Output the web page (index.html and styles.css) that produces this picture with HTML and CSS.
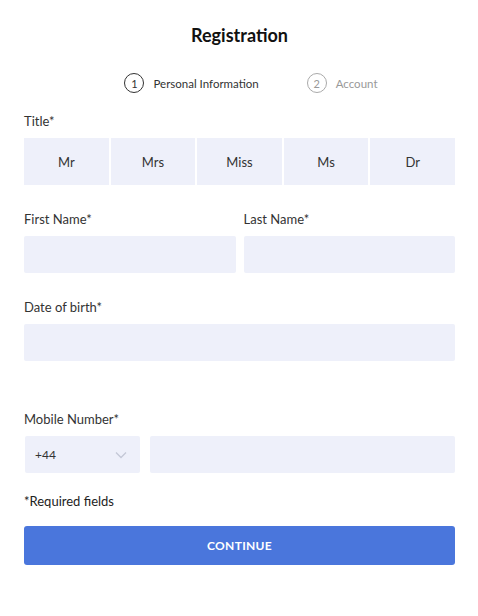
FILE: index.html
```html
<!DOCTYPE html>
<html lang="en">
<head>
  <meta charset="UTF-8">
  <meta name="viewport" content="width=device-width, initial-scale=1.0">
  <title>Registration</title>
  <link rel="stylesheet" href="styles.css">
</head>
<body>
  <div class="register-page">
    <h1>Registration</h1>

    <!-- Steps -->
    <div class="steps">
      <div class="step active"><span class="step-num">1</span>Personal Information</div>
      <div class="step"><span class="step-num">2</span>Account</div>
    </div>

    <label class="field-label">Title*</label>
    <div class="title-options">
      <button>Mr</button>
      <button>Mrs</button>
      <button>Miss</button>
      <button>Ms</button>
      <button>Dr</button>
    </div>

    <div class="name-row">
      <div class="field">
        <label class="field-label">First Name*</label>
        <input type="text">
      </div>
      <div class="field">
        <label class="field-label">Last Name*</label>
        <input type="text">
      </div>
    </div>

    <div class="field dob">
      <label class="field-label">Date of birth*</label>
      <input type="text">
    </div>

    <div class="field mobile">
      <label class="field-label">Mobile Number*</label>
      <div class="mobile-row">
        <div class="code-select">
          <span>+44</span>
          <svg width="12" height="8" viewBox="0 0 12 8"><path d="M1 1.5l5 5 5-5" fill="none" stroke="#c4c8d6" stroke-width="1.3"/></svg>
        </div>
        <input type="text">
      </div>
    </div>

    <p class="required-note">*Required fields</p>
    <button class="continue-btn">CONTINUE</button>
  </div>
</body>
</html>
```

FILE: styles.css
```css
body {
  font-family: Lato, "Noto Sans", sans-serif;
  margin: 0;
  background: #fff;
  color: #222;
}
.register-page {
  padding: 23px 23px 0 24px;
}
h1 {
  margin: 0;
  font-size: 18px;
  line-height: 24px;
  font-weight: bold;
  text-align: center;
  color: #111;
}
.steps {
  display: flex;
  justify-content: center;
  gap: 48px;
  margin-top: 26px;
  padding-left: 23px;
  height: 20px;
}
.step {
  display: flex;
  align-items: center;
  gap: 9px;
  font-size: 11.5px;
  color: #999;
}
.step.active {
  color: #333;
}
.step-num {
  width: 18px;
  height: 18px;
  border: 1px solid #aaa;
  border-radius: 50%;
  display: flex;
  align-items: center;
  justify-content: center;
  font-size: 11px;
}
.step.active .step-num {
  border-color: #333;
}
.field-label {
  display: block;
  font-size: 13px;
  line-height: 18px;
  color: #333;
  margin-bottom: 8px;
}
.steps + .field-label {
  margin-top: 19px;
}
.title-options {
  display: flex;
  gap: 2px;
}
.title-options button {
  flex: 1;
  height: 47px;
  border: none;
  background: #eef0fa;
  font-family: inherit;
  font-size: 13px;
  color: #333;
  padding: 0;
}
.name-row {
  display: flex;
  gap: 8px;
  margin-top: 25px;
}
.field {
  flex: 1;
}
input {
  display: block;
  width: 100%;
  box-sizing: border-box;
  height: 37px;
  border: none;
  background: #eef0fa;
  border-radius: 2px;
}
.dob {
  margin-top: 25px;
}
.mobile {
  margin-top: 49px;
}
.mobile-row {
  display: flex;
  gap: 10px;
}
.code-select {
  width: 115px;
  height: 37px;
  margin-left: 1px;
  box-sizing: border-box;
  background: #eef0fa;
  border-radius: 2px;
  display: flex;
  align-items: center;
  justify-content: space-between;
  padding: 0 13px 0 10px;
  font-size: 12px;
  color: #333;
}
.mobile-row input {
  flex: 1;
}
.required-note {
  margin: 19px 0 16px;
  font-size: 13px;
  line-height: 18px;
  color: #222;
}
.continue-btn {
  display: block;
  width: 100%;
  height: 39px;
  border: none;
  border-radius: 3px;
  background: #4a76dc;
  color: #fff;
  font-family: inherit;
  font-weight: bold;
  font-size: 12px;
  letter-spacing: 0.3px;
}
```
